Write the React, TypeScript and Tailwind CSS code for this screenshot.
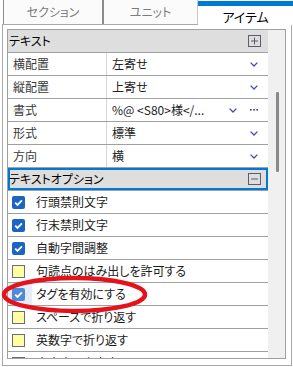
import React from "react";

type Prop = { label: string; value: string; more?: boolean };
type Option = { label: string; checked: boolean; selected?: boolean };

const props: Prop[] = [
  { label: "横配置", value: "左寄せ" },
  { label: "縦配置", value: "上寄せ" },
  { label: "書式", value: "%@ <S80>様</...", more: true },
  { label: "形式", value: "標準" },
  { label: "方向", value: "横" },
];

const options: Option[] = [
  { label: "行頭禁則文字", checked: true },
  { label: "行末禁則文字", checked: true },
  { label: "自動字間調整", checked: true },
  { label: "句読点のはみ出しを許可する", checked: false },
  { label: "タグを有効にする", checked: true, selected: true },
  { label: "スペースで折り返す", checked: false },
  { label: "英数字で折り返す", checked: false },
  { label: "大文字と小文字", checked: false },
];

const Chevron = () => (
  <svg width="8" height="5" viewBox="0 0 8 5" className="shrink-0">
    <path d="M0.6 0.6 L4 4 L7.4 0.6" fill="none" stroke="#4646c0" strokeWidth="1.3" />
  </svg>
);

const Dots = () => (
  <svg width="8" height="2" viewBox="0 0 8 2" className="shrink-0">
    <rect x="0" y="0" width="1.6" height="1.6" fill="#3c3c8c" />
    <rect x="3.2" y="0" width="1.6" height="1.6" fill="#3c3c8c" />
    <rect x="6.4" y="0" width="1.6" height="1.6" fill="#3c3c8c" />
  </svg>
);

const BoxIcon = ({ plus }: { plus?: boolean }) => (
  <svg width="13" height="12" viewBox="0 0 13 12" className="shrink-0">
    <rect x="0.5" y="0.5" width="12" height="11" fill="none" stroke="#5c5c70" />
    <path d="M3 6 H10" stroke="#5c5c70" />
    {plus && <path d="M6.5 2.5 V9.5" stroke="#5c5c70" />}
  </svg>
);

const Checkbox = ({ checked, light }: { checked: boolean; light?: boolean }) =>
  checked ? (
    <div
      className={`w-[13px] h-[13px] rounded-[2px] flex items-center justify-center ${
        light ? "bg-[#4f8ad8]" : "bg-[#1c63c6]"
      }`}
    >
      <svg width="13" height="13" viewBox="0 0 13 13">
        <path d="M3.2 6.6 L5.5 8.9 L9.9 4.4" fill="none" stroke="#fff" strokeWidth="1.8" />
      </svg>
    </div>
  ) : (
    <div className="w-[13px] h-[13px] border border-[#6a6a88] bg-[#ffffa0]" />
  );

export default function App() {
  return (
    <div className="relative w-[293px] h-[367px] bg-white overflow-hidden font-['Noto_Sans_CJK_JP','Noto_Sans',sans-serif] [font-feature-settings:'palt'] text-[12px] leading-none">
      {/* tabs */}
      <div className="flex h-[24px] items-start">
        <div className="w-[3px]" />
        <div className="w-[101px] h-[24px] bg-[#fbfbfb] border-l border-r-2 border-[#8c8c8c] flex items-center justify-center text-[#7c7c7c] pb-px">
          セクション
        </div>
        <div className="w-[94px] h-[24px] bg-[#fbfbfb] border-r border-[#c8c8c8] flex items-center justify-center text-[#7c7c7c] pb-px">
          ユニット
        </div>
        <div className="relative z-10 flex-1 h-[25px] bg-white flex flex-col">
          <div className="mt-px h-[5px] bg-[#0078d7]" />
          <div className="flex-1 flex items-center justify-center text-[13px] text-black pt-px">
            アイテム
          </div>
        </div>
      </div>

      {/* panel frame */}
      <div className="ml-[2px] w-[290px] h-[342px] border border-[#a8a8a8] pl-[4px] pr-[5px] pt-[4px] pb-[6px]">
        <div className="h-full border border-[#a0a0a0] flex">
          <div className="flex-1 overflow-hidden">
            <div className="h-[23px] bg-[#dedede] border-b border-[#a0a0a0] flex items-center pl-px pr-[7px] text-black">
              テキスト
              <span className="ml-auto">
                <BoxIcon plus />
              </span>
            </div>
            {props.map((p) => (
              <div key={p.label} className="h-[23px] border-b border-[#a0a0a0] flex">
                <div className="w-[99px] border-r border-[#d6d6d6] flex items-center pl-[5px] text-[#3a3a3a]">
                  {p.label}
                </div>
                <div className="flex-1 flex items-center pl-[5px] pr-[10px] text-[#222]">
                  <span className="whitespace-nowrap">{p.value}</span>
                  <span className={`ml-auto flex items-center ${p.more ? "gap-[13px]" : ""}`}>
                    <Chevron />
                    {p.more && <Dots />}
                  </span>
                </div>
              </div>
            ))}
            <div className="h-[23px] bg-[#dedede] border-b border-[#a0a0a0] flex items-center pl-px pr-[7px] text-black shadow-[inset_0_0_0_2px_#0078d7]">
              テキストオプション
              <span className="ml-auto">
                <BoxIcon />
              </span>
            </div>
            {options.map((o) => (
              <div key={o.label} className="h-[23px] border-b border-[#a0a0a0] flex items-center text-[#1a1a1a]">
                <div className={`w-[24px] h-full flex items-center pl-[4px] ${o.selected ? "bg-[#e6ecfa]" : ""}`}>
                  <Checkbox checked={o.checked} light={o.selected} />
                </div>
                <span className="pl-[4px] whitespace-nowrap">{o.label}</span>
              </div>
            ))}
          </div>
          {/* scrollbar */}
          <div className="w-[17px] bg-[#f0f0f0] pt-[62px] pl-[8px]">
            <div className="w-[3px] h-[80px] bg-[#8a8a8a] rounded-[1px]" />
          </div>
        </div>
      </div>

      {/* red annotation ellipse */}
      <svg
        className="absolute left-0 top-0 pointer-events-none"
        width="293"
        height="367"
        viewBox="0 0 293 367"
      >
        <ellipse cx="74.5" cy="294.5" rx="70.5" ry="16.5" fill="none" stroke="#e3121b" strokeWidth="4.5" />
      </svg>
    </div>
  );
}
